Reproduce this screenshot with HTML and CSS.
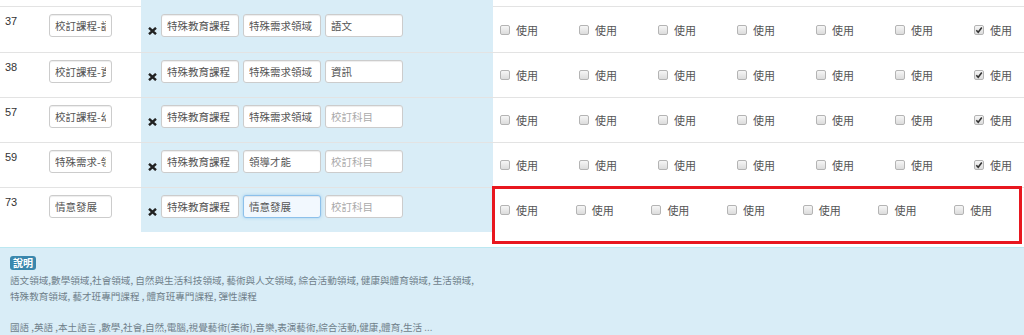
FILE: index.html
```html
<!DOCTYPE html>
<html lang="zh-Hant">

<head>
    <meta charset="UTF-8">
    <meta name="viewport" content="width=device-width, initial-scale=1.0">
    <title>課程對應</title>
    <link rel="stylesheet" href="styles.css">
</head>

<body>
    <div class="list">
        <div class="row cut">
            <div class="c-num"></div>
            <div class="c-name"></div>
            <div class="c-map"></div>
            <div class="c-use"></div>
        </div>

        <div class="row first">
            <div class="c-num">37</div>
            <div class="c-name"><input class="field" type="text" value="校訂課程-語文"></div>
            <div class="c-map">
                <svg class="del" width="9" height="8" viewBox="0 0 9 8"><path d="M1 0.8 L8 7.2 M8 0.8 L1 7.2" /></svg>
                <input class="field" type="text" value="特殊教育課程">
                <input class="field" type="text" value="特殊需求領域">
                <input class="field" type="text" value="語文" placeholder="校訂科目">
            </div>
            <div class="c-use">
                <label class="use"><span class="box"></span>使用</label>
                <label class="use"><span class="box"></span>使用</label>
                <label class="use"><span class="box"></span>使用</label>
                <label class="use"><span class="box"></span>使用</label>
                <label class="use"><span class="box"></span>使用</label>
                <label class="use"><span class="box"></span>使用</label>
                <label class="use"><span class="box on"><svg width="8" height="8" viewBox="0 0 8 8"><path d="M1.3 4.3 L3.2 6.2 L6.8 1.6" /></svg></span>使用</label>
            </div>
        </div>

        <div class="row">
            <div class="c-num">38</div>
            <div class="c-name"><input class="field" type="text" value="校訂課程-資訊"></div>
            <div class="c-map">
                <svg class="del" width="9" height="8" viewBox="0 0 9 8"><path d="M1 0.8 L8 7.2 M8 0.8 L1 7.2" /></svg>
                <input class="field" type="text" value="特殊教育課程">
                <input class="field" type="text" value="特殊需求領域">
                <input class="field" type="text" value="資訊" placeholder="校訂科目">
            </div>
            <div class="c-use">
                <label class="use"><span class="box"></span>使用</label>
                <label class="use"><span class="box"></span>使用</label>
                <label class="use"><span class="box"></span>使用</label>
                <label class="use"><span class="box"></span>使用</label>
                <label class="use"><span class="box"></span>使用</label>
                <label class="use"><span class="box"></span>使用</label>
                <label class="use"><span class="box on"><svg width="8" height="8" viewBox="0 0 8 8"><path d="M1.3 4.3 L3.2 6.2 L6.8 1.6" /></svg></span>使用</label>
            </div>
        </div>

        <div class="row">
            <div class="c-num">57</div>
            <div class="c-name"><input class="field" type="text" value="校訂課程-幼兒"></div>
            <div class="c-map">
                <svg class="del" width="9" height="8" viewBox="0 0 9 8"><path d="M1 0.8 L8 7.2 M8 0.8 L1 7.2" /></svg>
                <input class="field" type="text" value="特殊教育課程">
                <input class="field" type="text" value="特殊需求領域">
                <input class="field" type="text" value="" placeholder="校訂科目">
            </div>
            <div class="c-use">
                <label class="use"><span class="box"></span>使用</label>
                <label class="use"><span class="box"></span>使用</label>
                <label class="use"><span class="box"></span>使用</label>
                <label class="use"><span class="box"></span>使用</label>
                <label class="use"><span class="box"></span>使用</label>
                <label class="use"><span class="box"></span>使用</label>
                <label class="use"><span class="box on"><svg width="8" height="8" viewBox="0 0 8 8"><path d="M1.3 4.3 L3.2 6.2 L6.8 1.6" /></svg></span>使用</label>
            </div>
        </div>

        <div class="row">
            <div class="c-num">59</div>
            <div class="c-name"><input class="field" type="text" value="特殊需求-領導才能"></div>
            <div class="c-map">
                <svg class="del" width="9" height="8" viewBox="0 0 9 8"><path d="M1 0.8 L8 7.2 M8 0.8 L1 7.2" /></svg>
                <input class="field" type="text" value="特殊教育課程">
                <input class="field" type="text" value="領導才能">
                <input class="field" type="text" value="" placeholder="校訂科目">
            </div>
            <div class="c-use">
                <label class="use"><span class="box"></span>使用</label>
                <label class="use"><span class="box"></span>使用</label>
                <label class="use"><span class="box"></span>使用</label>
                <label class="use"><span class="box"></span>使用</label>
                <label class="use"><span class="box"></span>使用</label>
                <label class="use"><span class="box"></span>使用</label>
                <label class="use"><span class="box on"><svg width="8" height="8" viewBox="0 0 8 8"><path d="M1.3 4.3 L3.2 6.2 L6.8 1.6" /></svg></span>使用</label>
            </div>
        </div>

        <div class="row last">
            <div class="c-num">73</div>
            <div class="c-name"><input class="field" type="text" value="情意發展"></div>
            <div class="c-map">
                <svg class="del" width="9" height="8" viewBox="0 0 9 8"><path d="M1 0.8 L8 7.2 M8 0.8 L1 7.2" /></svg>
                <input class="field" type="text" value="特殊教育課程">
                <input class="field focus" type="text" value="情意發展">
                <input class="field" type="text" value="" placeholder="校訂科目">
            </div>
            <div class="c-use">
                <label class="use"><span class="box"></span>使用</label>
                <label class="use"><span class="box"></span>使用</label>
                <label class="use"><span class="box"></span>使用</label>
                <label class="use"><span class="box"></span>使用</label>
                <label class="use"><span class="box"></span>使用</label>
                <label class="use"><span class="box"></span>使用</label>
                <label class="use"><span class="box"></span>使用</label>
                <div class="mark"></div>
            </div>
        </div>
    </div>

    <div class="note">
        <span class="badge">說明</span>
        <p>
            語文領域,數學領域,社會領域, 自然與生活科技領域, 藝術與人文領域, 綜合活動領域, 健康與體育領域, 生活領域,<br>
            特殊教育領域, 藝才班專門課程 , 體育班專門課程, 彈性課程<br>
            <br>
            國語 ,英語 ,本土語言 ,數學,社會,自然,電腦,視覺藝術(美術),音樂,表演藝術,綜合活動,健康,體育,生活 ...
        </p>
    </div>
</body>

</html>
```

FILE: styles.css
```css
body {
    margin: 0;
    background: #fff;
    color: #555;
    font-family: "Noto Sans CJK TC", "Liberation Sans", sans-serif;
    font-size: 11px;
    overflow: hidden;
}

.row {
    display: grid;
    grid-template-columns: 41px 100px 352px 1fr;
    height: 44px;
    border-top: 1px solid #e3e3e3;
}

.row.first {
    height: 45px;
}

.row.cut {
    height: 6px;
    border-top: 0;
}

.c-num {
    padding: 8px 0 0 5px;
    font-family: "Liberation Sans", sans-serif;
    font-size: 11px;
    color: #333;
}

.c-name {
    padding: 7px 0 0 8px;
}

.c-map {
    display: flex;
    align-items: flex-start;
    gap: 4px;
    padding: 7px 0 0 7px;
    background: #d9edf7;
}

.del {
    margin-top: 13px;
    flex: none;
}

.del path {
    stroke: #222;
    stroke-width: 2.4;
    fill: none;
}

.field {
    width: 78px;
    height: 23px;
    box-sizing: border-box;
    margin: 0;
    padding: 0 5px;
    border: 1px solid #ccc;
    border-radius: 3px;
    background: #fff;
    box-shadow: inset 0 1px 1px rgba(0, 0, 0, .075);
    color: #555;
    font-family: "Noto Sans CJK TC", "Liberation Sans", sans-serif;
    font-size: 10.5px;
    outline: none;
}

.field::placeholder {
    color: #aaa;
}

.c-name .field {
    width: 63px;
}

.field.focus {
    border-color: #8dc0ea;
    background: #f2f8fe;
    box-shadow: inset 0 1px 1px rgba(0, 0, 0, .075), 0 0 3px rgba(102, 175, 233, .5);
}

.c-use {
    display: flex;
    align-items: center;
    padding-left: 7px;
    position: relative;
}

.use {
    display: flex;
    align-items: center;
    gap: 6px;
    width: 79px;
    flex: none;
    color: #555;
}

.last .use {
    width: 75.7px;
}

.box {
    display: flex;
    align-items: center;
    justify-content: center;
    width: 10px;
    height: 10px;
    box-sizing: border-box;
    border: 1px solid #b4b4b4;
    border-radius: 2px;
    background: linear-gradient(#f6f6f6, #dcdcdc);
}

.box svg path {
    stroke: #333;
    stroke-width: 1.6;
    fill: none;
}

/* annotation box round the last row */
.mark {
    position: absolute;
    top: -2px;
    left: -1px;
    width: 530px;
    height: 58px;
    box-sizing: border-box;
    border: 3px solid #e8171f;
}

.note {
    margin-top: 15px;
    padding: 8px 10px 0;
    border-top: 1px solid #bce8f1;
    background: #d9edf7;
}

.badge {
    display: inline-block;
    height: 14px;
    padding: 0 3px;
    border-radius: 3px;
    background: #3a87ad;
    color: #fff;
    font-size: 10px;
    font-weight: bold;
    line-height: 14px;
    vertical-align: top;
}

.note p {
    margin: 1px 0 0;
    color: #6f7f8a;
    font-size: 9.6px;
    line-height: 15.5px;
}
```
